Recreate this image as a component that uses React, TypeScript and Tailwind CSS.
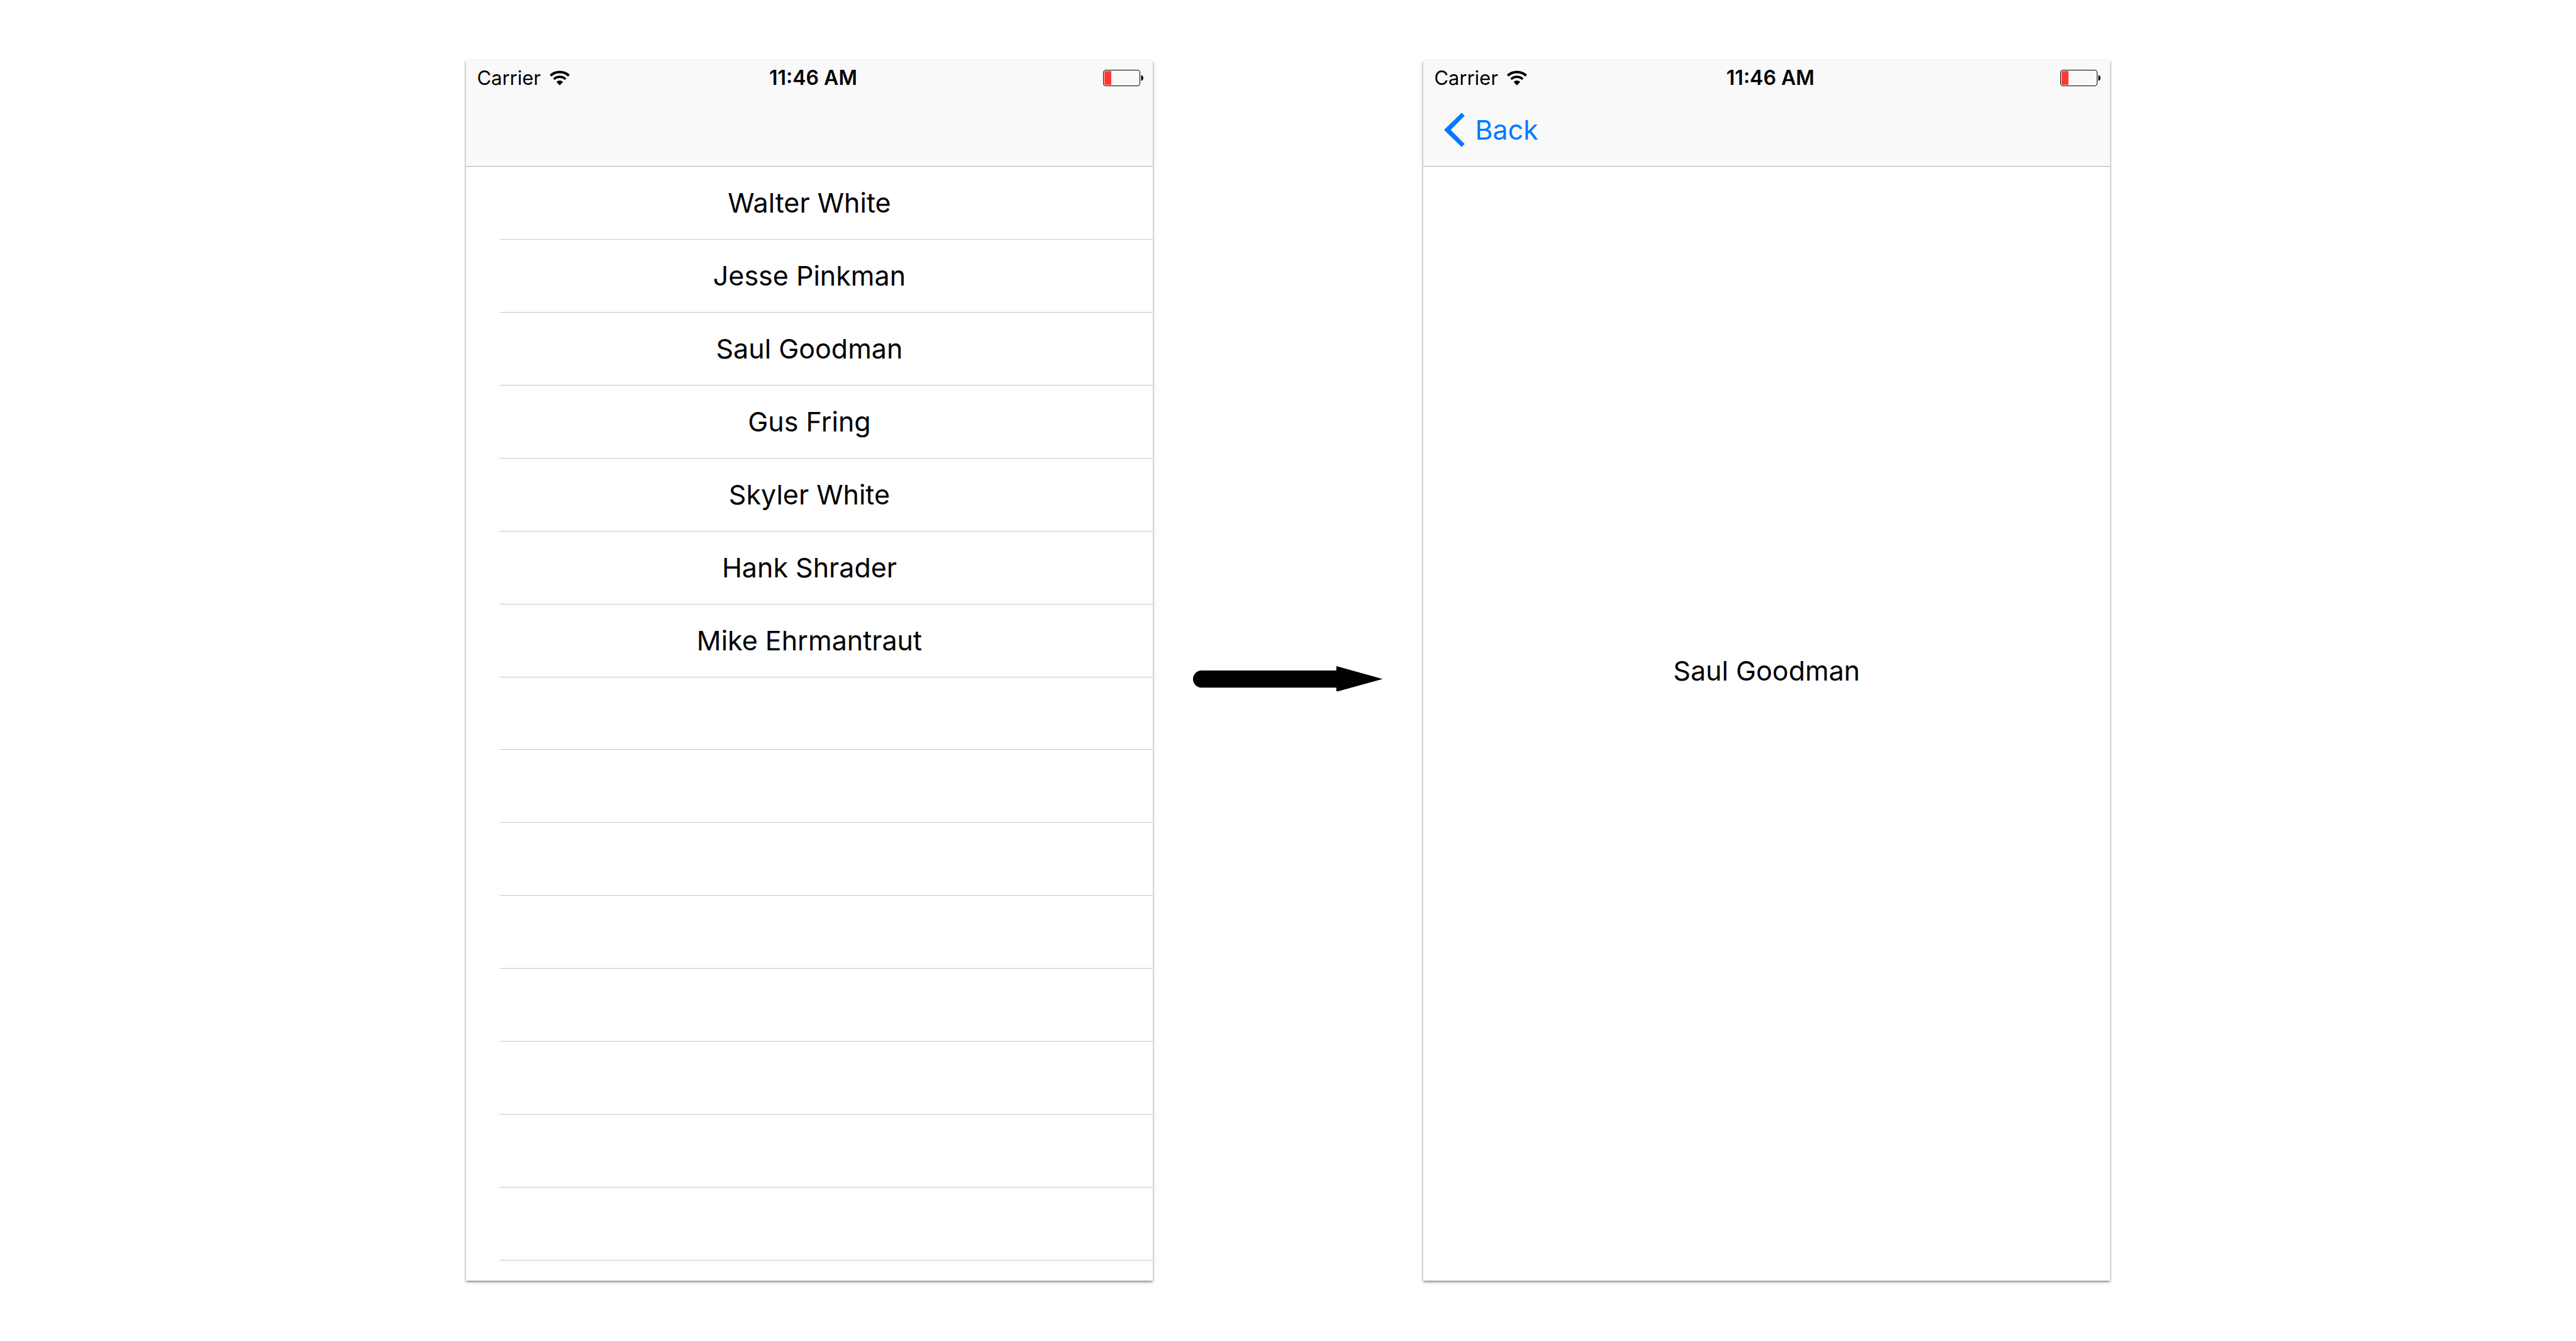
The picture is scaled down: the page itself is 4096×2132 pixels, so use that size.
import type { ReactNode } from "react";

const people = [
  "Walter White",
  "Jesse Pinkman",
  "Saul Goodman",
  "Gus Fring",
  "Skyler White",
  "Hank Shrader",
  "Mike Ehrmantraut",
];

const ROW_COUNT = 15;

function WifiIcon() {
  return (
    <svg viewBox="-55 -80 110 80" className="w-8 h-6" aria-hidden="true">
      <path d="M-55-58A80 80 0 0 1 55-58L45.4-47.9A66 66 0 0 0-45.4-47.9Z" />
      <path d="M-36.5-38.4A53 53 0 0 1 36.5-38.4L27.5-29A40 40 0 0 0-27.5-29Z" />
      <path d="M-17.9-18.9A26 26 0 0 1 17.9-18.9L0 0Z" />
    </svg>
  );
}

function BatteryIcon() {
  return (
    <svg viewBox="0 0 64 26" className="w-16 h-[26px]" role="img" aria-label="Battery low">
      <rect x="0.5" y="0.5" width="58" height="25" rx="3.5" fill="none" stroke="#000" />
      <path d="M4 2H13V24H4A2 2 0 0 1 2 22V4A2 2 0 0 1 4 2Z" fill="#ff3b30" />
      <path d="M60.5 8.5C65 9 65 17 60.5 17.5Z" />
    </svg>
  );
}

function StatusBar() {
  return (
    <div className="grid h-[53px] grid-cols-[1fr_auto_1fr] items-center pt-0.5 pl-[17px] pr-[15px] text-[31px] leading-none">
      <div className="flex items-center gap-[14px]">
        <span>Carrier</span>
        <WifiIcon />
      </div>
      <time className="pl-2.5 text-[32px] leading-none font-semibold">11:46 AM</time>
      <div className="flex justify-end">
        <BatteryIcon />
      </div>
    </div>
  );
}

function Phone({ nav, children }: { nav?: ReactNode; children: ReactNode }) {
  return (
    <section className="flex aspect-9/16 w-[26.64%] flex-col bg-white shadow-[0_2px_4px_rgba(0,0,0,0.5)]">
      <header className="border-b border-[#b2b2b2] bg-[#f9f9f9]">
        <StatusBar />
        <nav className="flex h-[115px] items-center px-[33px]">{nav}</nav>
      </header>
      {children}
    </section>
  );
}

function BackButton() {
  return (
    <button type="button" className="flex items-center gap-4 text-[#007aff]">
      <svg viewBox="165 345 114 189" className="h-[55px] w-[33px]" fill="currentColor" aria-hidden="true">
        <path d="M262 345L279 362L202 439.5L279 517L262 534L165 439.5Z" />
      </svg>
      Back
    </button>
  );
}

function Arrow() {
  return (
    <svg viewBox="0 0 1027 139" className="mt-[26px] w-[70%]" aria-hidden="true">
      <path d="M46 24H776V0L1027 70L776 139V117H46A46.5 46.5 0 0 1 46 24Z" />
    </svg>
  );
}

export default function App() {
  return (
    <main className="flex min-h-screen items-center justify-center bg-white font-['Inter',sans-serif] text-[43px] leading-none text-black">
      <Phone>
        <ul className="flex flex-1 flex-col pb-8">
          {Array.from({ length: ROW_COUNT }, (_, i) => (
            <li key={i} className="ml-[53px] flex flex-1 border-b border-[#c8c7cc]">
              {people[i] && (
                <button type="button" className="flex-1 pr-[53px] text-center">
                  {people[i]}
                </button>
              )}
            </li>
          ))}
        </ul>
      </Phone>
      <div className="flex w-[10.52%] justify-center">
        <Arrow />
      </div>
      <Phone nav={<BackButton />}>
        <div className="flex flex-1 items-center justify-center pb-[168px]">
          <p>Saul Goodman</p>
        </div>
      </Phone>
    </main>
  );
}
